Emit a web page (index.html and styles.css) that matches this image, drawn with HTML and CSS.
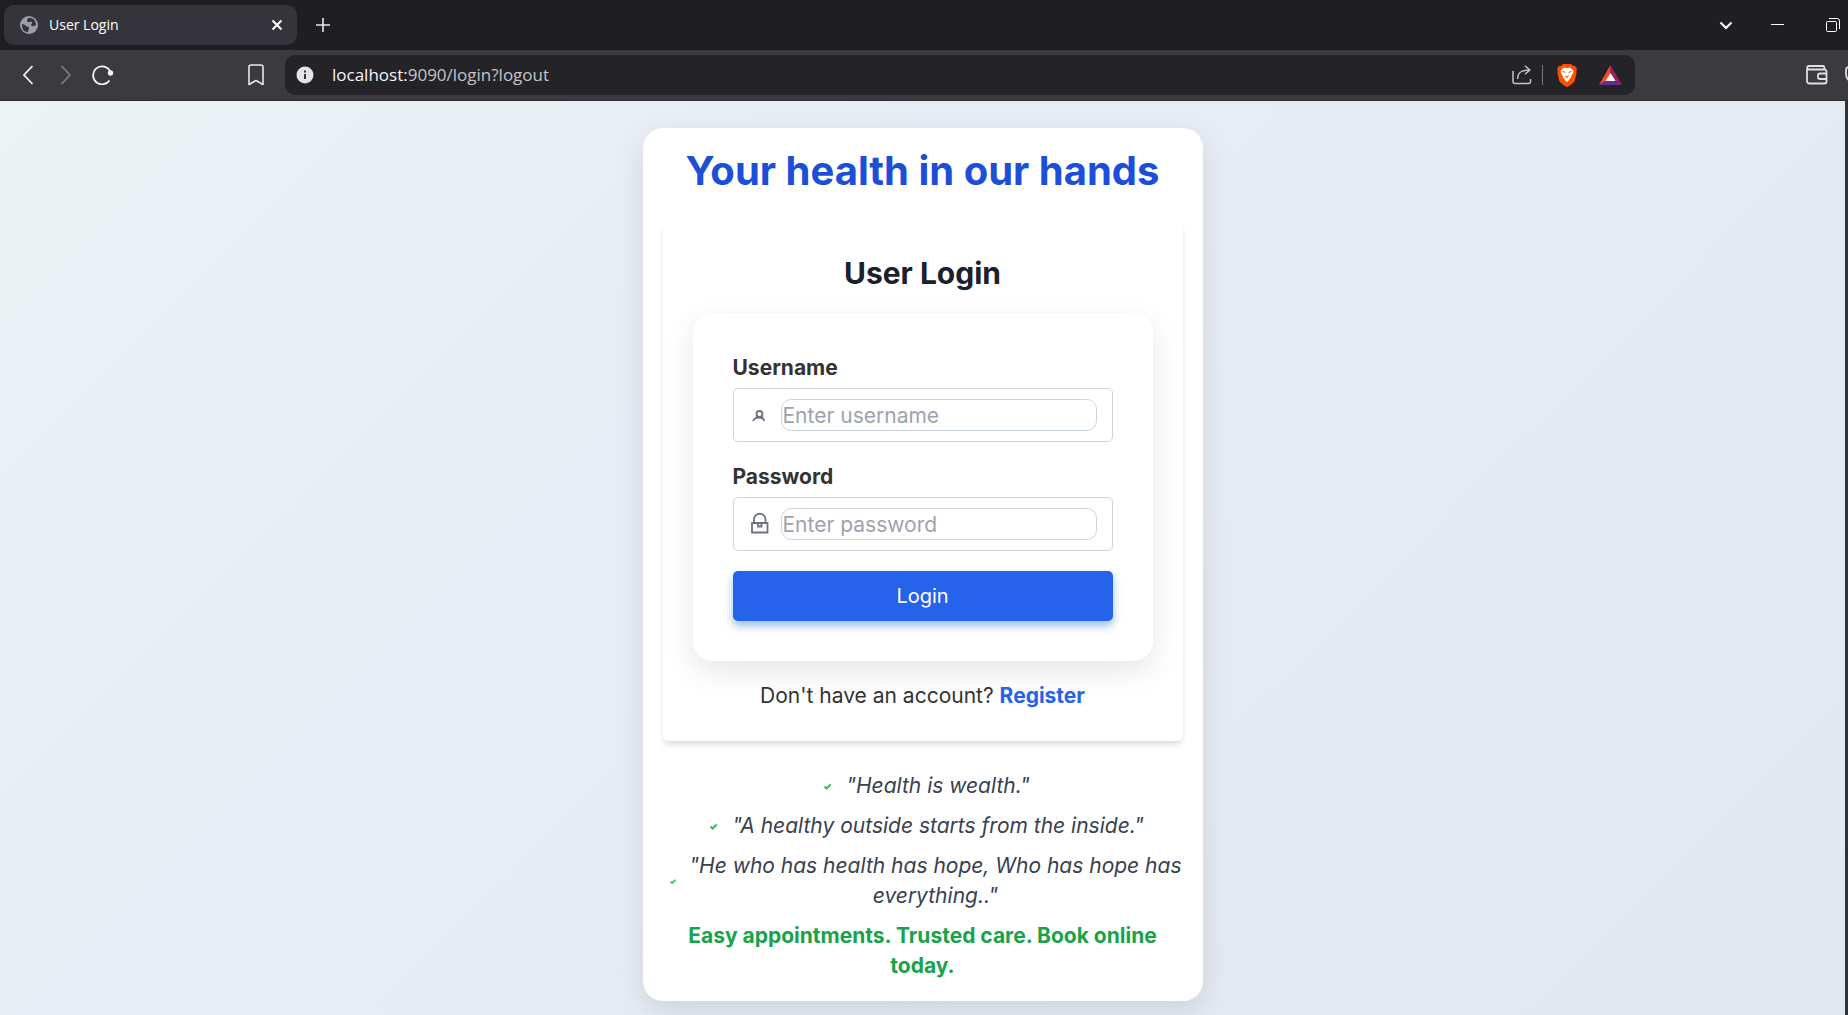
FILE: index.html
```html
<!DOCTYPE html>
<html lang="en">
<head>
<meta charset="utf-8">
<title>User Login</title>
<link rel="stylesheet" href="styles.css">
</head>
<body>
<div class="browser">
  <header class="tabstrip">
    <div class="tab">
      <svg class="tab-globe" viewBox="0 0 18 18"><circle cx="9" cy="9" r="9" fill="#9aa0a6"/><path d="M2 8c2 0 3 1 4 2s3 0 3 2-1 2-1 4.300C4 16 1.500 13 2 8zM9 1.800c-1 1-2 1.200-2 2.700s1 2 2.500 1.500 2-1 2.500.500-1 1.500-1 2.500 2 1.500 3 1 1.500-1 2.200-.5C16.200 5 13 1.500 9 1.800z" fill="#35343a"/></svg>
      <span class="tab-title">User Login</span>
      <button class="icon-button" aria-label="Close tab"><svg width="12" height="12" viewBox="0 0 12 12"><path d="M1.500 1.500l9 9M10.500 1.500l-9 9" stroke="#fff" stroke-width="2" fill="none"/></svg></button>
    </div>
    <button class="icon-button new-tab" aria-label="New tab"><svg width="14" height="14" viewBox="0 0 14 14"><path d="M7 0v14M0 7h14" stroke="#e8e8ea" stroke-width="1.600"/></svg></button>
    <div class="window-controls">
      <button class="icon-button" aria-label="Search tabs"><svg width="14" height="9" viewBox="0 0 14 9"><path d="M1.500 1.500L7 7l5.500-5.500" stroke="#fff" stroke-width="2.200" fill="none"/></svg></button>
      <button class="icon-button minimize" aria-label="Minimize"><svg width="13" height="3" viewBox="0 0 13 3"><path d="M0 .5h13" stroke="#fff" stroke-width="1"/></svg></button>
      <button class="icon-button" aria-label="Restore"><svg width="14" height="14" viewBox="0 0 14 14"><path d="M1.500 3.500h8a1 1 0 0 1 1 1v8a1 1 0 0 1-1 1h-8a1 1 0 0 1-1-1v-8a1 1 0 0 1 1-1zM3 .5h8a2.500 2.500 0 0 1 2.500 2.500v8" stroke="#fff" fill="none"/></svg></button>
    </div>
  </header>
  <nav class="toolbar">
    <button class="icon-button" aria-label="Back"><svg width="12" height="20" viewBox="0 0 12 20"><path d="M10.500 1L2 10l8.500 9" stroke="#f2f2f4" stroke-width="1.800" fill="none"/></svg></button>
    <button class="icon-button" aria-label="Forward"><svg width="12" height="20" viewBox="0 0 12 20"><path d="M1.500 1L10 10l-8.500 9" stroke="#7c7b80" stroke-width="1.800" fill="none"/></svg></button>
    <button class="icon-button reload" aria-label="Reload"><svg width="22" height="20" viewBox="0 0 22 20"><path d="M17 4.500A9 9 0 1 0 17.500 15.500M17 4.500L18.500 7" stroke="#f2f2f4" stroke-width="1.800" fill="none"/><circle cx="18.500" cy="8" r="2.700" fill="#f2f2f4"/></svg></button>
    <button class="icon-button bookmark" aria-label="Bookmark"><svg width="16" height="22" viewBox="0 0 16 22"><path d="M1 20.500V3a2 2 0 0 1 2-2h10a2 2 0 0 1 2 2v17.500l-7-4z" stroke="#e8e8ea" stroke-width="1.600" fill="none" stroke-linejoin="round"/></svg></button>
    <div class="address">
      <button class="icon-button" aria-label="Site information"><svg width="18" height="18" viewBox="0 0 18 18"><circle cx="9" cy="9" r="8.500" fill="#e4e4e8"/><path d="M9 8v5M9 4.500v2" stroke="#34333a" stroke-width="2"/></svg></button>
      <span class="url">localhost:<span class="path">9090/login?logout</span></span>
      <button class="icon-button share" aria-label="Share"><svg width="20" height="20" viewBox="0 0 20 20"><path d="M1 6v10.500a2 2 0 0 0 2 2h13.500a2 2 0 0 0 2-2V14M5.500 14c0-6 3-9 12-9M13 .8L17.800 5 13 9.200" stroke="#c4c4c8" stroke-width="1.500" fill="none"/></svg></button>
      <span class="divider"></span>
      <button class="icon-button shield" aria-label="Brave Shields"><svg width="20" height="23" viewBox="0 0 20 23"><path d="M6 0h8l2 2 2-.3L20 5l-.7 2 .3 2-2 8.500L13 21.500 10 23l-3-1.500-4.600-4L.4 9l.3-2L0 5l2-3.300L4 2z" fill="#ff5000"/><path d="M7 3.500l3 .7 3-.7 3.500 3.200-.5 2.500-2 3 .3 1.300-2.300 1.500.5.700L10 18l-2.500-2.300.5-.7-2.300-1.500.3-1.300-2-3-.5-2.500z" fill="#fff"/><path d="M5.500 7.500l3 .8M14.500 7.500l-3 .8M8.200 12l1.800.8 1.800-.8M10 12.800v1.500" stroke="#ff5000" stroke-width="1" fill="none"/></svg></button>
      <button class="icon-button" aria-label="Brave Rewards"><svg width="23" height="20" viewBox="0 0 23 20"><path d="M11.500 0L0 20l11.500-7z" fill="#ff4724"/><path d="M11.500 0L23 20l-11.500-7z" fill="#9e1f63"/><path d="M0 20h23l-11.500-7z" fill="#662d91"/><path d="M11.500 8l5 8h-10z" fill="#fff"/></svg></button>
    </div>
    <div class="extras">
      <button class="icon-button" aria-label="Wallet"><svg width="22" height="20" viewBox="0 0 22 20"><path d="M1 3.500V16a2.500 2.500 0 0 0 2.500 2.500H18.500a2 2 0 0 0 2-2V6.500a2 2 0 0 0-2-2H3a1.700 1.700 0 0 1 0-3.500H17q1.500 0 1.500 3M20.500 8.500H14a2 2 0 0 0-2 2v1.500a2 2 0 0 0 2 2H20.500" stroke="#e0e0e4" stroke-width="1.800" fill="none"/></svg></button>
      <button class="icon-button" aria-label="VPN"><svg width="18" height="20" viewBox="0 0 18 20"><path d="M9 1C6 1 3 2 1.500 3 1 4 1 6 1 9c0 5 4 8 8 10 4-2 8-5 8-10V3.500C15 3.500 12 3 9 1z" stroke="#e0e0e4" stroke-width="1.800" fill="none"/></svg></button>
    </div>
  </nav>
  <main class="page">
    <section class="card">
      <h1 class="slogan">Your health in our hands</h1>
      <div class="login">
        <h2 class="login-title">User Login</h2>
        <form class="login-form">
          <label class="label" for="username">Username</label>
          <div class="field">
            <svg class="field-icon" viewBox="0 0 25 25" fill="none" stroke="#6b7280" stroke-width="1.800"><circle cx="13.500" cy="11" r="3"/><path d="M7 18c1-2.500 3.500-3.300 6-3.300s4.500.8 5.500 3.300M11.500 13.500l-1.500 1.500M15.500 13.500l1.500 1.500"/></svg>
            <input class="input" id="username" type="text" placeholder="Enter username">
          </div>
          <label class="label" for="password">Password</label>
          <div class="field">
            <svg class="field-icon" viewBox="0 0 25 25" fill="none" stroke="#6b7280" stroke-width="1.800"><path d="M6 11h15.500v9.500H6zM8 11V7.500a5.700 5.700 0 0 1 11.500 0V11M12 11v3.500h3.500V11"/></svg>
            <input class="input" id="password" type="password" placeholder="Enter password">
          </div>
          <button class="submit" type="submit">Login</button>
        </form>
        <p class="register">Don't have an account? <a class="register-link" href="#register">Register</a></p>
      </div>
      <ul class="quotes">
        <li class="quote"><svg class="check" viewBox="0 0 25 25"><path d="M9.500 12.500l2 2 4.200-4" /></svg><span>"Health is wealth."</span></li>
        <li class="quote"><svg class="check" viewBox="0 0 25 25"><path d="M9.500 12.500l2 2 4.200-4" /></svg><span>"A healthy outside starts from the inside."</span></li>
        <li class="quote"><svg class="check" viewBox="0 0 25 25"><path d="M9.500 12.500l2 2 4.200-4" /></svg><span>"He who has health has hope, Who has hope has everything.."</span></li>
      </ul>
      <p class="tagline">Easy appointments. Trusted care. Book online today.</p>
    </section>
  </main>
</div>
</body>
</html>
```
FILE: styles.css
```css
* { box-sizing: border-box; margin: 0; padding: 0; }
body { background: #333237; color: #333; font: 21px/30px Inter, "Open Sans", sans-serif; }
button { border: 0; background: none; font: inherit; cursor: pointer; }
svg { display: block; }

.browser { min-height: 100vh; display: flex; flex-direction: column; overflow: hidden; }
.icon-button { display: flex; flex: none; }

.tabstrip { display: flex; align-items: center; height: 50px; padding-left: 4px; background: #1f1e23; }
.tab { display: flex; align-items: center; width: 293px; height: 40px; padding: 0 14px 0 16px; border-radius: 10px; background: #35343a; color: #fff; font: 14px/20px "Open Sans", sans-serif; }
.tab-globe { width: 18px; height: 18px; margin-right: 11px; }
.tab-title { flex: 1; }
.new-tab { margin-left: 19px; }
.window-controls { display: flex; align-items: center; gap: 38px; margin-left: auto; padding-right: 8px; }
.minimize { margin-right: 4px; }

.toolbar { display: flex; align-items: center; height: 51px; padding-left: 22px; border-bottom: 1px solid #2c2b2f; background: #3b3a3f; }
.toolbar > .icon-button { margin-right: 26px; }
.toolbar > .reload { margin: 0 134px 0 -6px; }
.toolbar > .bookmark { margin-right: 21px; }
.address { flex: 1; display: flex; align-items: center; height: 40px; padding: 0 13px 0 11px; border-radius: 10px; background: #242328; }
.url { flex: 1; margin-left: 18px; color: #f4f4f6; font: 17px/24px "Open Sans", sans-serif; }
.path { color: #c4c4c8; }
.divider { width: 1px; height: 20px; margin: 0 14px 0 10px; background: #77767b; }
.shield { margin-right: 22px; }
.extras { display: flex; align-items: center; gap: 17px; margin: 0 -15px 0 171px; }

.page { flex: 1; margin-right: 3px; padding: 27px 20px 14px; background: linear-gradient(135deg, #edf2f4 0%, #e7ecf5 40%, #e2e8f0 100%); }
.card { max-width: 560px; margin: 0 auto; padding: 20px; border-radius: 20px; background: #fff; box-shadow: 0 10px 30px rgba(0, 0, 0, .1); text-align: center; }
.slogan { margin-bottom: 30px; color: #1d4ed8; font-size: 40px; line-height: 45px; font-weight: 700; white-space: nowrap; }
.login { margin-bottom: 30px; padding: 30px; border-radius: 5px; box-shadow: 0 5px 7px -1px rgba(0, 0, 0, .1), 0 2px 5px -2px rgba(0, 0, 0, .1); }
.login-title { margin-bottom: 20px; color: #1a202c; font-size: 30px; line-height: 40px; font-weight: 700; }
.login-form { padding: 40px; border-radius: 20px; background: #fff; box-shadow: 0 10px 30px rgba(0, 0, 0, .1); text-align: left; }
.label { display: block; margin-bottom: 5px; font-weight: 700; }
.field { display: flex; align-items: center; height: 54px; margin-bottom: 20px; padding: 0 15px 0 12px; border: 1px solid #d1d5db; border-radius: 5px; }
.field-icon { flex: none; width: 25px; height: 25px; margin-right: 10px; }
.input { flex: 1; min-width: 0; height: 32px; padding: 0 1px; border: 1px solid #cbd5e1; border-radius: 10px; background: #fff; color: #333; font: inherit; }
.input::placeholder { color: #9ca3af; opacity: 1; }
.submit { display: block; width: 100%; height: 50px; border-radius: 5px; background: #2563eb; color: #fff; box-shadow: 0 5px 8px rgba(49, 130, 206, .5); font-size: 20px; }
.register { margin-top: 20px; }
.register-link { color: #2563eb; font-weight: 700; text-decoration: none; }
.quotes { list-style: none; color: #374151; font-style: italic; }
.quote { display: flex; align-items: center; justify-content: center; margin-bottom: 10px; }
.check { width: 25px; height: 25px; margin-right: 6px; fill: none; stroke: #22c55e; stroke-width: 2; }
.tagline { color: #16a34a; font-weight: 700; }
```
